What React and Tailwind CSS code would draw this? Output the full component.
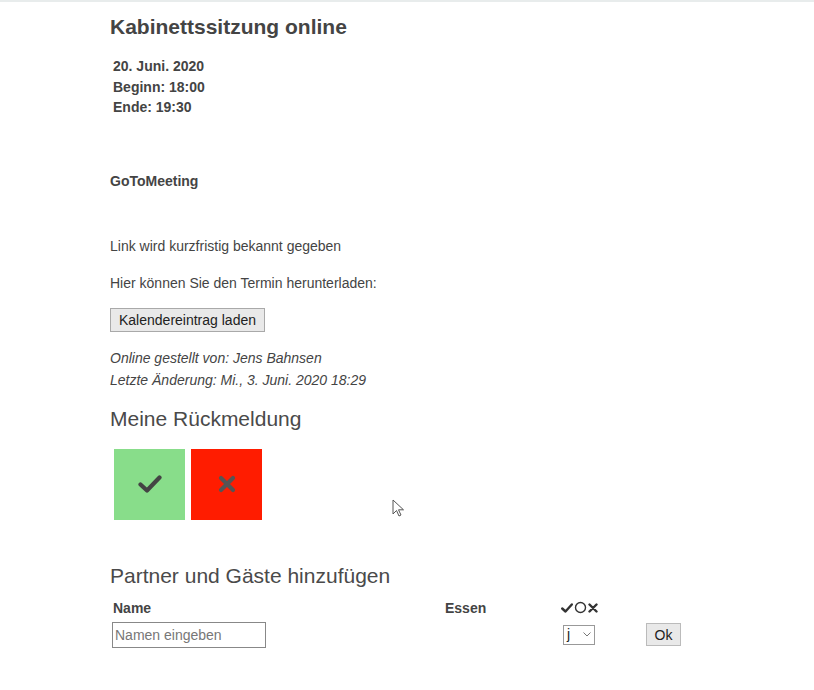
import React from "react";

function Cursor() {
  return (
    <svg className="absolute left-[392px] top-[497px]" width="13" height="19" viewBox="0 0 13 19">
      <path d="M1 1 L1 15 L4.5 11.5 L7 17 L9 16 L6.5 10.8 L11.5 10.8 Z" fill="#fff" stroke="#555" strokeWidth="1" strokeLinejoin="round" />
    </svg>
  );
}

export default function App() {
  return (
    <div className="relative w-[814px] h-[690px] bg-white border-t-2 border-[#e8ecec] text-[#444] font-['Liberation_Sans',Arial,sans-serif] text-[14px]">
      <div className="pl-[110px]">
        <h1 className="text-[21px] font-bold leading-[24px] pt-[13px]">Kabinettssitzung online</h1>

        <div className="mt-[17px] pl-[3px] font-bold leading-[20.5px]">
          <div>20. Juni. 2020</div>
          <div>Beginn: 18:00</div>
          <div>Ende: 19:30</div>
        </div>

        <div className="mt-[53px] font-bold leading-[20px]">GoToMeeting</div>

        <p className="mt-[45px] leading-[20px]">Link wird kurzfristig bekannt gegeben</p>
        <p className="mt-[17px] leading-[20px]">Hier können Sie den Termin herunterladen:</p>

        <button className="mt-[15px] h-[24px] px-[8px] bg-[#e9e9e9] border border-[#a9a9a9] text-[#222] leading-[20px]">
          Kalendereintrag laden
        </button>

        <div className="mt-[15px] italic leading-[22px]">
          <div>Online gestellt von: Jens Bahnsen</div>
          <div>Letzte Änderung: Mi., 3. Juni. 2020 18:29</div>
        </div>

        <h2 className="mt-[16px] text-[21px] leading-[24px] text-[#4a4a4a]">Meine Rückmeldung</h2>

        <div className="mt-[18px] ml-[4px] flex gap-[6px]">
          <div className="w-[71px] h-[71px] bg-[#88dd8a] flex items-center justify-center">
            <svg width="24" height="20" viewBox="0 0 24 20">
              <path d="M2.5 10.5 L9 16.5 L21.5 3.5" fill="none" stroke="#444" strokeWidth="4.2" strokeLinecap="round" strokeLinejoin="round" />
            </svg>
          </div>
          <div className="w-[71px] h-[71px] bg-[#ff1c00] flex items-center justify-center">
            <svg width="18" height="18" viewBox="0 0 18 18">
              <path d="M3 3 L15 15 M15 3 L3 15" fill="none" stroke="#555" strokeWidth="4.2" strokeLinecap="round" />
            </svg>
          </div>
        </div>

        <h2 className="mt-[44px] text-[21px] leading-[24px] text-[#4a4a4a]">Partner und Gäste hinzufügen</h2>

        <div className="mt-[10px] grid grid-cols-[335px_116px_85px_auto] items-center">
          <div className="pl-[3px] font-bold leading-[20px]">Name</div>
          <div className="font-bold leading-[20px]">Essen</div>
          <div className="flex items-center gap-[1px] text-[#333]">
            <svg width="12" height="10" viewBox="0 0 12 10">
              <path d="M1.2 5.5 L4.5 8.5 L10.8 1.5" fill="none" stroke="#333" strokeWidth="2.4" strokeLinecap="round" strokeLinejoin="round" />
            </svg>
            <svg width="13" height="13" viewBox="0 0 13 13">
              <circle cx="6.5" cy="6.5" r="5" fill="none" stroke="#333" strokeWidth="1.4" />
            </svg>
            <svg width="10" height="10" viewBox="0 0 10 10">
              <path d="M1.5 1.5 L8.5 8.5 M8.5 1.5 L1.5 8.5" fill="none" stroke="#333" strokeWidth="2.4" strokeLinecap="round" />
            </svg>
          </div>
          <div />

          <div className="pt-[4px] pl-[2px]">
            <input
              placeholder="Namen eingeben"
              className="w-[154px] h-[26px] border border-[#888] px-[2px] text-[14px] placeholder:text-[#777] outline-none"
            />
          </div>
          <div />
          <div className="pt-[4px] pl-[2px]">
            <div className="w-[32px] h-[20px] border border-[#999] flex items-center justify-between px-[3px] text-[14px] text-[#222]">
              <span>j</span>
              <svg width="8" height="5" viewBox="0 0 8 5">
                <path d="M0.5 0.5 L4 4 L7.5 0.5" fill="none" stroke="#777" strokeWidth="1" />
              </svg>
            </div>
          </div>
          <div className="pt-[4px]">
            <button className="w-[35px] h-[23px] bg-[#e9e9e9] border border-[#bbb] text-[#222] text-[14px] leading-[20px]">Ok</button>
          </div>
        </div>
      </div>
      <Cursor />
    </div>
  );
}
